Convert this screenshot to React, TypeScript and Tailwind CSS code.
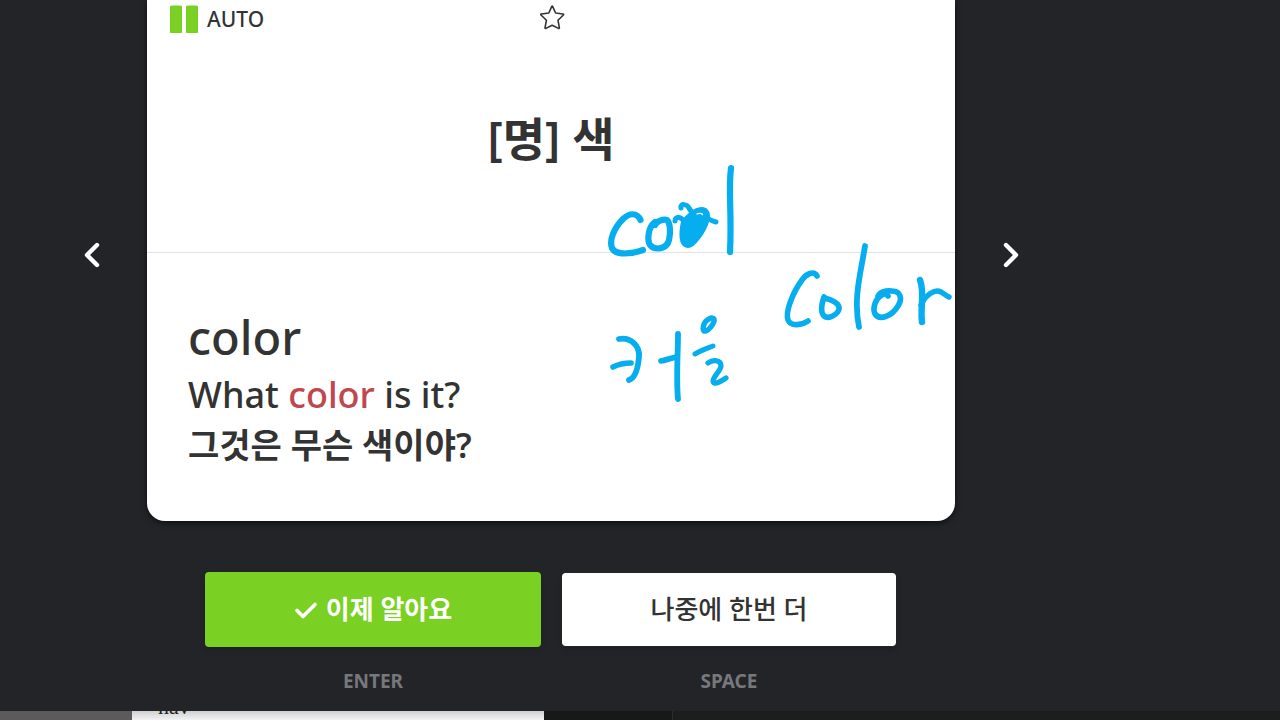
function Chevron({ flip = false }: { flip?: boolean }) {
  return (
    <svg
      viewBox="0 0 24 30"
      className={flip ? "h-[30px] w-6 rotate-180" : "h-[30px] w-6"}
      fill="none"
      stroke="currentColor"
      strokeWidth="4.4"
      strokeLinecap="round"
      strokeLinejoin="round"
      aria-hidden="true"
    >
      <path d="M17 5 L7 15 L17 25" />
    </svg>
  );
}

function Ink() {
  return (
    <svg
      viewBox="147 0 808 521"
      className="pointer-events-none absolute top-0 right-0 h-[521px] w-[808px]"
      fill="none"
      stroke="#06adef"
      strokeWidth="6.2"
      strokeLinecap="round"
      strokeLinejoin="round"
      aria-hidden="true"
    >
      <path d="M640.5 220 C637 212 629 213 623 219 C614 228 609 240 612 248 C616 256 632 254 643 250" />
      <path d="M655 222 C648 227 647 240 650 245 C655 251 667 249 669 240 C671 232 670 223 667 220 C663 219 657 221 655 225" />
      <path d="M675 221 C675 217 680 216 683 220 C686 224 688 229 688 234" strokeWidth="5" />
      <path d="M681 208 C680 203 687 204 689 208 C691 211 693 214 694 218" strokeWidth="5" />
      <path d="M684 222 C690 216 695 210 701 210 C707 210 708 215 706 221 C703 231 693 245 688 245 C681 244 682 232 684 222Z" fill="#06adef" />
      <path d="M697 214 C699 213 702 213 703 215" stroke="#ffffff" strokeWidth="1.2" />
      <path d="M705 216 C708 219 712 221 716 222" strokeWidth="5" />
      <path d="M731 168 C728 190 732 212 730 252" />
      <path d="M817 276 C814 270 806 274 802 280 C793 292 785 312 788 320 C791 327 802 325 808 321" strokeWidth="5.6" />
      <path d="M824 297 C822 303 820 312 824 316 C829 320 838 314 839 309 C840 303 830 299 824 298" strokeWidth="5.6" />
      <path d="M865 246 C861 272 853 298 859 327" strokeWidth="5.8" />
      <path d="M883 294 C876 298 872 307 875 314 C880 321 892 316 898 306 C903 298 900 291 892 291 C886 290 880 292 878 296 C881 292 886 293 888 296" strokeWidth="5.6" />
      <path d="M920 280 C925 292 920 308 922 322" strokeWidth="6.4" />
      <path d="M921 305 C926 294 935 289 941 292 C944 294 947 296 949 297" strokeWidth="5.4" />
      <path d="M619 339 C631 337 640 346 639 357 C638 368 635 378 629 380" strokeWidth="5.8" />
      <path d="M613 367 C619 364 626 363 631 363" strokeWidth="5.6" />
      <path d="M678 334 C678 354 676 378 678 399" strokeWidth="5.8" />
      <path d="M661 361 C667 360 671 358 676 357" strokeWidth="5.6" />
      <path d="M709 319 C704 321 702 328 704 331 C708 332 715 323 714 319 C713 317 710 318 709 319 Z" strokeWidth="5.4" />
      <path d="M695 354 C702 350 708 348 713 346" strokeWidth="5" />
      <path d="M708 363 C713 359 721 360 721 366 C721 371 710 379 714 383 C717 384 723 380 726 378" strokeWidth="5.2" />
    </svg>
  );
}

export default function App() {
  return (
    <div className="flex h-screen flex-col overflow-hidden bg-[#222428] font-['Noto_Sans','Noto_Sans_CJK_KR',sans-serif] text-[#333333]">
      <main className="flex-1 pr-[178px]">
        <div className="flex">
          <div className="flex w-[147px] shrink-0 items-center justify-center pl-9">
            <button type="button" aria-label="Previous card" className="mb-3 text-white">
              <Chevron />
            </button>
          </div>

          <article className="relative min-w-0 flex-1 rounded-b-[18px] bg-white shadow-[0_2px_6px_rgba(0,0,0,0.6)]">
            <section className="h-[253px] border-b border-[#e2e2e2]">
              <div className="grid grid-cols-3 items-start px-[23px] pt-[5px]">
                <button type="button" className="flex items-center gap-2 text-[21px] leading-7 font-medium">
                  <svg viewBox="0 0 29 28" className="h-7 w-[29px]" fill="#7ad023" aria-hidden="true">
                    <rect x="0" y="0.5" width="12" height="28" rx="1.5" />
                    <rect x="16" y="0.5" width="12" height="28" rx="1.5" />
                  </svg>
                  AUTO
                </button>
                <button type="button" aria-label="Bookmark card" className="justify-self-center">
                  <svg viewBox="0 0 28 28" className="size-7" fill="none" stroke="#333333" strokeWidth="1.6" strokeLinejoin="round" aria-hidden="true">
                    <path d="M14.8 1.4 Q15.2 0.6 15.6 1.4 L18.6 8 L26 9 Q27 9.3 26.4 10 L21 15.3 L22.4 22.8 Q22.4 23.8 21.5 23.4 L15.2 20.2 L8.9 23.4 Q8 23.8 8 22.8 L9.4 15.3 L4 10 Q3.4 9.3 4.4 9 L11.8 8 Z" />
                  </svg>
                </button>
              </div>
              <h1 className="mt-[71px] text-center text-[46px] leading-[68px] font-semibold">[명] 색</h1>
            </section>
            <section className="px-[41px] pt-[52px] pb-[50px]">
              <h2 className="text-[47px] leading-[64px] font-medium">color</h2>
              <p className="text-[36px] leading-[51px] font-medium">
                What <span className="text-[#c0474e]">color</span> is it?
              </p>
              <p className="text-[34px] leading-[51px] font-semibold">그것은 무슨 색이야?</p>
            </section>
            <Ink />
          </article>

          <div className="flex w-[147px] shrink-0 items-center justify-center pr-9">
            <button type="button" aria-label="Next card" className="mb-3 text-white">
              <Chevron flip />
            </button>
          </div>
        </div>

        <div className="flex gap-5 px-[205px] pt-[51px] text-center">
          <div className="flex-1">
            <button type="button" className="flex h-[75px] w-full items-center justify-center gap-2 rounded bg-[#7ad023] text-[26px] font-bold text-white shadow-md">
              <svg viewBox="0 0 24 24" className="size-6" fill="none" stroke="currentColor" strokeWidth="3.6" strokeLinecap="round" strokeLinejoin="round" aria-hidden="true">
                <path d="M3 12.5 L9 18.5 L21 6.5" />
              </svg>
              이제 알아요
            </button>
            <div className="mt-5 text-[19px] leading-7 font-bold text-[#77787b]">ENTER</div>
          </div>
          <div className="flex-1">
            <button type="button" className="h-[75px] w-full rounded border border-[#222428] bg-white bg-clip-padding text-[26px] font-medium shadow-md">
              나중에 한번 더
            </button>
            <div className="mt-5 text-[19px] leading-7 font-bold text-[#77787b]">SPACE</div>
          </div>
        </div>
      </main>

      <footer className="flex h-[9px] shrink-0 overflow-hidden">
        <div className="w-[132px] bg-[#5c5a5a]" />
        <div className="flex w-[412px] items-end bg-linear-to-b from-[#d0d0d2] to-[#f2f2f4] pb-[2px] pl-[26px] font-['Liberation_Serif',serif] text-[22px] leading-[22px] text-[#222222]">
          nav
        </div>
        <div className="w-[128px] bg-[#171818]" />
        <div className="flex-1 border-l border-[#2a2b2c] bg-[#1c1d1d]" />
      </footer>
    </div>
  );
}
